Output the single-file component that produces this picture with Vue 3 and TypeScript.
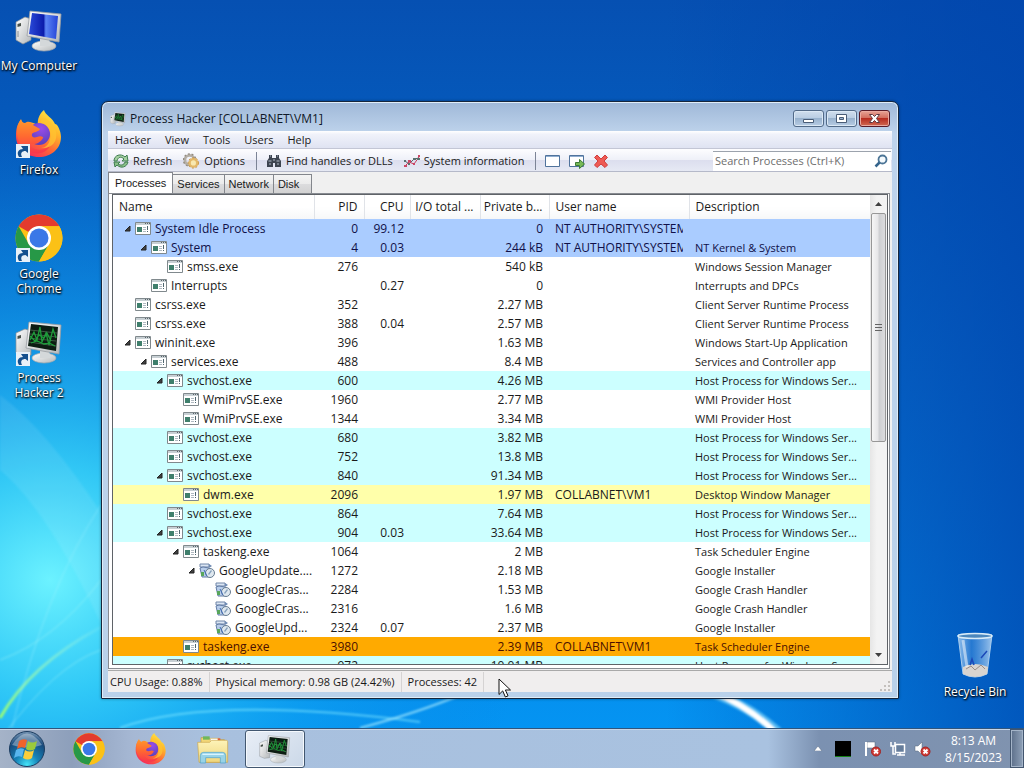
<script setup lang="ts">
import { ref } from 'vue'

interface Proc {
  name: string
  depth: number
  open?: boolean
  kind?: 'google'
  pid: string
  cpu?: string
  bytes: string
  user?: string
  desc?: string
  tone?: 'system' | 'service' | 'elevated' | 'own'
}

const host = 'Host Process for Windows Ser...'
const processes: Proc[] = [
  { name: 'System Idle Process', depth: 0, open: true, pid: '0', cpu: '99.12', bytes: '0', user: 'NT AUTHORITY\\SYSTEM', tone: 'system' },
  { name: 'System', depth: 1, open: true, pid: '4', cpu: '0.03', bytes: '244 kB', user: 'NT AUTHORITY\\SYSTEM', desc: 'NT Kernel & System', tone: 'system' },
  { name: 'smss.exe', depth: 2, pid: '276', bytes: '540 kB', desc: 'Windows Session Manager' },
  { name: 'Interrupts', depth: 1, pid: '', cpu: '0.27', bytes: '0', desc: 'Interrupts and DPCs' },
  { name: 'csrss.exe', depth: 0, pid: '352', bytes: '2.27 MB', desc: 'Client Server Runtime Process' },
  { name: 'csrss.exe', depth: 0, pid: '388', cpu: '0.04', bytes: '2.57 MB', desc: 'Client Server Runtime Process' },
  { name: 'wininit.exe', depth: 0, open: true, pid: '396', bytes: '1.63 MB', desc: 'Windows Start-Up Application' },
  { name: 'services.exe', depth: 1, open: true, pid: '488', bytes: '8.4 MB', desc: 'Services and Controller app' },
  { name: 'svchost.exe', depth: 2, open: true, pid: '600', bytes: '4.26 MB', desc: host, tone: 'service' },
  { name: 'WmiPrvSE.exe', depth: 3, pid: '1960', bytes: '2.77 MB', desc: 'WMI Provider Host' },
  { name: 'WmiPrvSE.exe', depth: 3, pid: '1344', bytes: '3.34 MB', desc: 'WMI Provider Host' },
  { name: 'svchost.exe', depth: 2, pid: '680', bytes: '3.82 MB', desc: host, tone: 'service' },
  { name: 'svchost.exe', depth: 2, pid: '752', bytes: '13.8 MB', desc: host, tone: 'service' },
  { name: 'svchost.exe', depth: 2, open: true, pid: '840', bytes: '91.34 MB', desc: host, tone: 'service' },
  { name: 'dwm.exe', depth: 3, pid: '2096', bytes: '1.97 MB', user: 'COLLABNET\\VM1', desc: 'Desktop Window Manager', tone: 'own' },
  { name: 'svchost.exe', depth: 2, pid: '864', bytes: '7.64 MB', desc: host, tone: 'service' },
  { name: 'svchost.exe', depth: 2, open: true, pid: '904', cpu: '0.03', bytes: '33.64 MB', desc: host, tone: 'service' },
  { name: 'taskeng.exe', depth: 3, open: true, pid: '1064', bytes: '2 MB', desc: 'Task Scheduler Engine' },
  { name: 'GoogleUpdate....', depth: 4, open: true, kind: 'google', pid: '1272', bytes: '2.18 MB', desc: 'Google Installer' },
  { name: 'GoogleCras...', depth: 5, kind: 'google', pid: '2284', bytes: '1.53 MB', desc: 'Google Crash Handler' },
  { name: 'GoogleCras...', depth: 5, kind: 'google', pid: '2316', bytes: '1.6 MB', desc: 'Google Crash Handler' },
  { name: 'GoogleUpd...', depth: 5, kind: 'google', pid: '2324', cpu: '0.07', bytes: '2.37 MB', desc: 'Google Installer' },
  { name: 'taskeng.exe', depth: 3, pid: '3980', bytes: '2.39 MB', user: 'COLLABNET\\VM1', desc: 'Task Scheduler Engine', tone: 'elevated' },
  { name: 'svchost.exe', depth: 2, pid: '972', bytes: '10.01 MB', desc: host, tone: 'service' },
]

const menus = ['Hacker', 'View', 'Tools', 'Users', 'Help']
const tabs = ['Processes', 'Services', 'Network', 'Disk']
const activeTab = ref('Processes')
const query = ref('')

const shortcuts = [
  { label: 'My Computer', icon: 'computer', link: false },
  { label: 'Firefox', icon: 'firefox', link: true },
  { label: 'Google Chrome', icon: 'chrome', link: true },
  { label: 'Process Hacker 2', icon: 'hacker', link: true },
]
const pinned = [
  { label: 'Google Chrome', icon: 'chrome', active: false },
  { label: 'Firefox', icon: 'firefox', active: false },
  { label: 'Windows Explorer', icon: 'explorer', active: false },
  { label: 'Process Hacker', icon: 'hacker', active: true },
]
</script>

<template>
  <div class="desktop">
    <svg class="defs" aria-hidden="true">
      <defs>
        <linearGradient id="screenBlue" x1="0" y1="0" x2="1" y2="0">
          <stop offset="0" stop-color="#2a4ad8" /><stop offset=".5" stop-color="#0c1cac" /><stop offset=".58" stop-color="#5c84f4" /><stop offset="1" stop-color="#2444d8" />
        </linearGradient>
        <linearGradient id="shell" x1="0" y1="0" x2="1" y2="1">
          <stop offset="0" stop-color="#ffffff" /><stop offset="1" stop-color="#b4b8ba" />
        </linearGradient>
        <linearGradient id="fire" x1=".85" y1="0" x2=".25" y2="1">
          <stop offset="0" stop-color="#fff04a" /><stop offset=".35" stop-color="#ffb52a" /><stop offset=".65" stop-color="#ff6a35" /><stop offset="1" stop-color="#f5265d" />
        </linearGradient>
        <linearGradient id="fox" x1="0" y1="0" x2="0" y2="1">
          <stop offset="0" stop-color="#ff9a2c" /><stop offset=".5" stop-color="#ff6a30" /><stop offset="1" stop-color="#f8364c" />
        </linearGradient>
        <radialGradient id="globe" cx=".6" cy=".25" r=".8">
          <stop offset="0" stop-color="#9a4ce8" /><stop offset="1" stop-color="#5340b8" />
        </radialGradient>
        <linearGradient id="folder" x1="0" y1="0" x2="0" y2="1">
          <stop offset="0" stop-color="#fdf3b8" /><stop offset="1" stop-color="#efd67c" />
        </linearGradient>
        <radialGradient id="orb" cx=".5" cy=".95" r=".95">
          <stop offset="0" stop-color="#45e4f8" /><stop offset=".35" stop-color="#1683b8" /><stop offset=".75" stop-color="#174a7c" /><stop offset="1" stop-color="#7d9ab8" />
        </radialGradient>
        <linearGradient id="glass" x1="0" y1="0" x2="1" y2="0">
          <stop offset="0" stop-color="#c4e0f8" stop-opacity=".75" /><stop offset=".4" stop-color="#4a94e0" stop-opacity=".5" /><stop offset="1" stop-color="#cfe6fa" stop-opacity=".75" />
        </linearGradient>
      </defs>
      <symbol id="computer" viewBox="0 0 48 48">
        <path d="M1 16 L10 11 L16 13 V34 L8 38 L1 34Z" fill="url(#shell)" stroke="#8b9095" stroke-width=".7" />
        <path d="M2.500 18 L6 17 V20 L2.500 21Z" fill="#48504a" /><path d="M3 25v6" stroke="#8b9095" />
        <ellipse cx="29" cy="40" rx="12" ry="5" fill="url(#shell)" stroke="#a3a8ac" stroke-width=".7" />
        <path d="M25 30 h9 l1 10 h-10z" fill="#d4d8da" />
        <path d="M15 5 L46 8 L44 36 L12 30Z" fill="url(#shell)" stroke="#999da2" stroke-width=".8" />
        <path d="M17 7 L43 10 L41 33 L14 28Z" fill="url(#screenBlue)" />
      </symbol>
      <symbol id="hacker" viewBox="0 0 48 48">
        <path d="M1 15 L10 11 L16 13 V37 L8 38 L1 35Z" fill="url(#shell)" stroke="#8b9095" stroke-width=".7" />
        <path d="M2.500 18 L6 17 V20 L2.500 21Z" fill="#48504a" />
        <ellipse cx="29" cy="40" rx="12" ry="5" fill="url(#shell)" stroke="#a3a8ac" stroke-width=".7" />
        <path d="M25 30 h9 l1 10 h-10z" fill="#d4d8da" />
        <path d="M14 4 L46 7 L44 36 L11 30Z" fill="url(#shell)" stroke="#999da2" stroke-width=".8" />
        <path d="M16 6 L43 9 L41 33 L13 28Z" fill="#0c1c12" />
        <path d="M15 12l27 3M15 16l27 3M14 20l27 3M14 24l27 4" stroke="#4d6351" stroke-width=".8" />
        <path d="M15 22l4-8 3 8 3-13 2 15 4-9 3 12 4-16 3 9M16 25l6-2 7 3 5-1 6 3M15 18l5 5 4-6 5 3 3-5 4 8" fill="none" stroke="#1e9c3a" stroke-width="1.300" />
      </symbol>
      <symbol id="chrome" viewBox="0 0 48 48">
        <circle cx="24" cy="24" r="23.500" fill="#fbc116" />
        <path d="M24 24 L3.650 12.250 A23.500 23.500 0 0 1 44.350 12.250 H24Z" fill="#e33b2e" />
        <path d="M3.650 12.250 A23.500 23.500 0 0 0 24 47.500 L34.200 29.900 L24 24 L13.800 29.900Z" fill="#279847" />
        <path d="M24 12.250 H44.350 A23.500 23.500 0 0 1 24 47.500 L34.200 29.900Z" fill="#fbc116" />
        <circle cx="24" cy="24" r="12" fill="#fff" /><circle cx="24" cy="24" r="9.500" fill="#3b78e7" />
      </symbol>
      <symbol id="firefox" viewBox="0 0 48 48">
        <path d="M29 0 C30 5 38 8 40 14 C43 14 46 22 46 27 C46 39 36 47 24 47 C11 47 1 38 1 26 C1 19 2 14 6 10 C7 12 8 14 10 14 C14 10 20 14 23 15 C22 9 25 3 29 0Z" fill="url(#fire)" />
        <circle cx="24" cy="24" r="11" fill="url(#globe)" />
        <path d="M2 22 C2 17 3 13 6 9 C7 12 8 13 10 13 C14 10 17 13 18 15 L25 19 C24 22 18 22 17 24 C16 27 19 28 22 27 C26 25 29 27 28 28 C25 34 17 36 12 32 C17 42 31 42 36 33 C34 43 22 46 13 41 C6 38 2 30 2 22Z" fill="url(#fox)" />
        <path d="M26 13 C33 14 37 21 35 29 C34 35 30 38 26 38 C37 39 43 31 41 22 C39 15 35 12 30 8 C27 9 25 10 26 13Z" fill="#ffc431" opacity=".75" />
      </symbol>
      <symbol id="explorer" viewBox="0 0 48 48">
        <path d="M6 7 h12 l2 3 h21 v34 H6z" fill="#f2d777" stroke="#bd9a45" />
        <path d="M9 5h10v5H9z" fill="#70b85a" /><path d="M20 8h13v5H20z" fill="#fff" stroke="#d9b65a" /><path d="M31 8h4v5h-4z" fill="#e0583a" />
        <path d="M1 14 h18 l3-3 h22 q2 0 2 2 v31 H3z" fill="url(#folder)" stroke="#cba64c" />
        <path d="M5 45 V34 q0-5 5-5 h28 q5 0 5 5 v11 h-8 v-8 H13 v8z" fill="#8ed2f2" fill-opacity=".9" stroke="#4ca0cc" />
        <path d="M8 32h32" stroke="#d8f4ff" stroke-width="2" />
      </symbol>
      <symbol id="exe" viewBox="0 0 16 14">
        <path d="M.5 .5h15v12H.5z" fill="#fff" stroke="#80898d" />
        <path d="M1 1h14v2H1z" fill="#c8d0d4" /><path d="M10 1h1v1h-1zM12 1h1v1h-1zM14 1h1v1h-1z" fill="#59646a" />
        <path d="M2 5h5v5H2z" fill="#3f7f6c" /><path d="M8 5h3v1H8zM8 7h3v1H8zM8 9h3v1H8z" fill="#b1bac2" /><path d="M12.500 4v4M12.500 9v1" stroke="#4f666f" />
      </symbol>
      <symbol id="google" viewBox="0 0 16 16">
        <path d="M1 1h9v3H1z" fill="#dbe6f4" stroke="#7186a8" /><path d="M1 5l3-1 6 1v9H3z" fill="#b8cdea" stroke="#627ca6" />
        <path d="M10 1l3 2-3 2" fill="#6e8ab3" /><path d="M2 9h3v4H2z" fill="#58a65b" />
        <circle cx="11" cy="10" r="4.500" fill="#dfe8ef" stroke="#667b90" /><path d="M9 11l3-4 1 1-3 4z" fill="#86a1bc" />
        <path d="M5 7l3 6" stroke="#406ab8" />
      </symbol>
    </svg>

    <svg class="wallpaper" viewBox="0 0 1024 768" preserveAspectRatio="none" aria-hidden="true">
      <defs>
        <linearGradient id="sky" x1="0" y1="0" x2="0" y2="1">
          <stop offset="0" stop-color="#0650b2" /><stop offset=".14" stop-color="#0558ba" /><stop offset=".5" stop-color="#0872d2" /><stop offset="1" stop-color="#0498f6" />
        </linearGradient>
        <radialGradient id="glow" gradientUnits="userSpaceOnUse" cx="0" cy="0" r="1" gradientTransform="translate(50 580) scale(480 450)">
          <stop offset="0" stop-color="#6cf2ff" /><stop offset=".25" stop-color="#36d0f8" stop-opacity=".9" /><stop offset=".6" stop-color="#12a4f0" stop-opacity=".5" /><stop offset="1" stop-color="#0a80e0" stop-opacity="0" />
        </radialGradient>
        <linearGradient id="dusk" x1="0" y1="0" x2="1" y2="0">
          <stop offset=".65" stop-color="#0040a8" stop-opacity="0" /><stop offset="1" stop-color="#0044ac" stop-opacity=".75" />
        </linearGradient>
        <linearGradient id="blade" x1="0" y1="1" x2="1" y2="0">
          <stop offset="0" stop-color="#9cff70" /><stop offset="1" stop-color="#bffff0" stop-opacity=".1" />
        </linearGradient>
        <filter id="soft"><feGaussianBlur stdDeviation="1" /></filter>
      </defs>
      <path d="M0 0H1024V768H0z" fill="url(#sky)" />
      <path d="M0 0H1024V768H0z" fill="url(#glow)" />
      <path d="M0 0H1024V768H0z" fill="url(#dusk)" />
      <path d="M0 395 Q60 440 130 560 V690 Q60 520 0 470z" fill="#fff" opacity=".08" filter="url(#soft)" />
      <g fill="none" filter="url(#soft)">
        <path d="M0 718 Q30 665 101 627" stroke="url(#blade)" stroke-width="3" />
        <path d="M12 728 Q45 590 101 505" stroke="#b0f4ff" stroke-opacity=".4" />
        <path d="M0 660 Q55 640 101 580M0 740 Q55 665 101 650" stroke="#c0fff5" stroke-opacity=".4" />
        <path d="M120 728 Q210 695 420 722" stroke="#80e8ff" stroke-opacity=".6" stroke-width="2" />
        <path d="M360 728 Q420 712 460 695" stroke="#b0f0ff" stroke-opacity=".7" stroke-width="2" />
        <path d="M704 690 Q744 702 778 732" stroke="#9be8ff" stroke-width="10" stroke-opacity=".55" />
        <path d="M708 690 Q746 704 775 732" stroke="#fff" stroke-width="6" />
      </g>
    </svg>

    <nav class="shortcuts" aria-label="Desktop">
      <button v-for="s in shortcuts" :key="s.label" class="shortcut" :class="{ linked: s.link }" type="button">
        <span class="art">
          <svg width="48" height="48"><use :href="'#' + s.icon" /></svg>
          <svg v-if="s.link" class="link-mark" width="14" height="14" viewBox="0 0 14 14"><path d="M0 0h14v14H0z" fill="#e8f0f8" /><path d="M3 13 C0 8 3 5 7 5 L5 2 H12 V9 L9.500 7 C6 7 4 9 6 13Z" fill="#15508e" /></svg>
        </span>
        <span class="caption">{{ s.label }}</span>
      </button>
    </nav>

    <button class="shortcut bin" type="button">
      <svg width="48" height="48" viewBox="0 0 48 48">
        <path d="M7 3 L41 3 L36 42 Q24 48 12 42Z" fill="url(#glass)" stroke="#a9cdee" />
        <path d="M12 35 Q24 29 37 35 L36 42 Q24 48 12 42Z" fill="#d8d4d0" />
        <path d="M15 37l5-3 4 4 6-5 4 4" stroke="#9a8d88" fill="none" /><path d="M19 33l2-6 2 6M30 26l6-7" stroke="#1c48b8" fill="none" stroke-width="1.500" />
        <ellipse cx="24" cy="4" rx="17" ry="2.500" fill="#4b87bd" stroke="#d9ecf8" stroke-width="1.500" />
        <path d="M12 8l4 27" stroke="#fff" stroke-opacity=".5" stroke-width="3" />
      </svg>
      <span class="caption">Recycle Bin</span>
    </button>

    <main class="window">
      <header class="titlebar">
        <svg width="16" height="16"><use href="#hacker" /></svg>
        <h1>Process Hacker [COLLABNET\VM1]</h1>
        <div class="controls">
          <button type="button" aria-label="Minimize"><svg width="13" height="10" viewBox="0 0 13 10"><path d="M1.500 5.500h10v3h-10z" fill="#fff" stroke="#495c77" /></svg></button>
          <button type="button" aria-label="Maximize"><svg width="13" height="10" viewBox="0 0 13 10"><path d="M1.500 .5h10v8h-10zM4.500 3.500v2h4v-2z" fill="#fff" fill-rule="evenodd" stroke="#495c77" /></svg></button>
          <button type="button" class="close" aria-label="Close"><svg width="13" height="10" viewBox="0 0 13 10"><path d="M1.500 .5h3l2 2 2-2h3L8.500 4.500l3 4h-3l-2-2-2 2h-3l3-4z" fill="#fff" stroke="#5c3a42" /></svg></button>
        </div>
      </header>

      <div class="client">
        <nav class="menubar" aria-label="Menu"><button v-for="m in menus" :key="m" type="button">{{ m }}</button></nav>

        <div class="toolbar">
          <button type="button">
            <svg width="16" height="16" viewBox="0 0 16 16"><path d="M1 8 C1 2 8 0 12 4 L14 2 L15 8 H9 L11 6 C8 3 5 4 4 8Z" fill="#a4cfa0" stroke="#3f7d50" /><path d="M15 9 C14 14 8 16 4 12 L2 14 L1 9 H7 L5 11 C8 13 11 12 12 9Z" fill="#8abf88" stroke="#3f7d50" /></svg>Refresh
          </button>
          <button type="button">
            <svg width="17" height="16" viewBox="0 0 18 16"><circle cx="7" cy="7" r="5" fill="none" stroke="#b5afa6" stroke-width="3" /><circle cx="7" cy="7" r="6.500" fill="none" stroke="#928b80" stroke-width="1.500" stroke-dasharray="2 2" /><circle cx="11" cy="10" r="4" fill="#f8e8b0" stroke="#e4b868" stroke-width="2.500" /><circle cx="11" cy="10" r="5.500" fill="none" stroke="#c58d32" stroke-width="1" stroke-dasharray="2 2" /></svg>Options
          </button>
          <i class="rule"></i>
          <button type="button">
            <svg width="16" height="16" viewBox="0 0 16 16"><path d="M3 2h3v3h4V2h3v3l2 3v6H9v-4H7v4H1V8l2-3z" fill="#3d4450" /><path d="M2.500 8h3M10.500 8h3M3 11h2M11 11h2M7 7h2M4 3h1M11 3h1" stroke="#b2bbc8" /></svg>Find handles or DLLs
          </button>
          <button type="button">
            <svg width="16" height="16" viewBox="0 0 16 16"><path d="M1 8l4 3 5-5 5-1" fill="none" stroke="#56646c" /><path d="M1 13l4-4 5 2 5-7" fill="none" stroke="#c83c5c" /><path d="M0 7h2v2H0zM4 10h2v2H4zM9 5h3v2H9zM13 5h3v2h-3z" fill="#58716e" /><path d="M0 12h3v2H0zM4 7h3v2H4zM9 10h2v2H9zM14 2h2v2h-2z" fill="#cb4665" /></svg>System information
          </button>
          <i class="rule"></i>
          <button type="button" class="glyph" aria-label="Find window"><svg width="16" height="16" viewBox="0 0 16 16"><path d="M.5 2.500h14v11H.5z" fill="#fff" stroke="#50739c" /><path d="M1 3h13v1H1z" fill="#8fadd0" /></svg></button>
          <button type="button" class="glyph" aria-label="Find window and thread"><svg width="16" height="16" viewBox="0 0 16 16"><path d="M.5 2.500h14v11H.5z" fill="#fff" stroke="#50739c" /><path d="M1 3h13v1H1z" fill="#8fadd0" /><path d="M6.500 9.500h4v-3l5 4.500-5 4.500v-3h-4z" fill="#76b956" stroke="#3d7b35" /></svg></button>
          <button type="button" class="glyph" aria-label="Find window and kill"><svg width="16" height="16" viewBox="0 0 16 16"><path d="M4 2l4 4 4-4 2.500 2.500L11 8l3.500 4L12 14.500 8 11l-4 3.500L1.500 12 5 8 1.500 4.500z" fill="#ee5a54" stroke="#d03c3c" /></svg></button>
          <label class="search">
            <input v-model="query" type="text" placeholder="Search Processes (Ctrl+K)" aria-label="Search Processes" />
            <svg width="14" height="14" viewBox="0 0 14 14"><circle cx="8.500" cy="5.500" r="4" fill="#f5fafd" stroke="#4c7596" stroke-width="1.800" /><path d="M5.500 8.500L1.500 12.500" stroke="#34648c" stroke-width="2.500" /></svg>
          </label>
        </div>

        <div class="tabs" role="tablist">
          <button v-for="t in tabs" :key="t" type="button" role="tab" :aria-selected="t === activeTab" :class="{ active: t === activeTab }" @click="activeTab = t">{{ t }}</button>
        </div>

        <section class="panel">
          <div class="list">
            <div class="rows">
              <table>
                <colgroup><col class="c-name" /><col class="c-pid" /><col class="c-cpu" /><col class="c-io" /><col class="c-bytes" /><col class="c-user" /><col /></colgroup>
                <thead>
                  <tr><th>Name</th><th class="num">PID</th><th class="num">CPU</th><th class="num">I/O total ...</th><th class="num">Private b...</th><th>User name</th><th>Description</th></tr>
                </thead>
                <tbody>
                  <tr v-for="(p, i) in processes" :key="i" :class="p.tone">
                    <td class="name">
                      <div class="node" :style="{ paddingLeft: p.depth * 16 + 'px' }">
                        <svg width="7" height="7" viewBox="0 0 7 7"><path v-if="p.open" d="M6 1v5H1z" fill="#404040" stroke="#222" /></svg>
                        <svg v-if="p.kind === 'google'" width="16" height="16"><use href="#google" /></svg>
                        <svg v-else width="16" height="14"><use href="#exe" /></svg>
                        <span>{{ p.name }}</span>
                      </div>
                    </td>
                    <td class="num">{{ p.pid }}</td>
                    <td class="num">{{ p.cpu }}</td>
                    <td></td>
                    <td class="num">{{ p.bytes }}</td>
                    <td><div class="clip">{{ p.user }}</div></td>
                    <td class="desc">{{ p.desc }}</td>
                  </tr>
                </tbody>
              </table>
            </div>
            <div class="scrollbar">
              <button type="button" aria-label="Scroll up"><svg width="7" height="4" viewBox="0 0 7 4"><path d="M0 4L3.500 0 7 4z" fill="#404040" /></svg></button>
              <div class="track"><div class="thumb"><i></i><i></i><i></i></div></div>
              <button type="button" aria-label="Scroll down"><svg width="7" height="4" viewBox="0 0 7 4"><path d="M0 0h7L3.500 4z" fill="#404040" /></svg></button>
            </div>
          </div>
        </section>

        <footer class="status">
          <span>CPU Usage: 0.88%</span><span>Physical memory: 0.98 GB (24.42%)</span><span>Processes: 42</span>
          <svg class="grip" width="11" height="11" viewBox="0 0 11 11"><path d="M8 0h2v2H8zM8 4h2v2H8zM8 8h2v2H8zM4 4h2v2H4zM4 8h2v2H4zM0 8h2v2H0z" fill="#c4c0bd" /></svg>
        </footer>
      </div>
    </main>

    <footer class="taskbar">
      <button class="start" type="button" aria-label="Start">
        <svg width="38" height="38" viewBox="0 0 38 38">
          <circle cx="19" cy="19" r="17.500" fill="url(#orb)" stroke="#1b3c60" />
          <path d="M4 15 Q19 -8 34 15 Q19 20 4 15Z" fill="#fff" opacity=".35" />
          <path d="M11 11q4-3 8-1l-2 8q-4-2-8 1z" fill="#f0622b" /><path d="M20 11q4 3 9 0l-2 8q-5 3-9 0z" fill="#9bca3c" />
          <path d="M8 20q4-3 8-1l-2 8q-4-2-8 1z" fill="#58b5ee" /><path d="M17 20q5 3 9 0l-2 8q-4 3-9 0z" fill="#fbce3a" />
        </svg>
      </button>
      <button v-for="p in pinned" :key="p.label" type="button" class="pin" :class="{ active: p.active }" :aria-label="p.label">
        <svg width="32" height="32"><use :href="'#' + p.icon" /></svg>
      </button>
      <div class="tray">
        <svg class="spaced" width="8" height="5" viewBox="0 0 8 5"><path d="M0 5L4 0l4 5z" fill="#fff" stroke="#516580" stroke-width=".5" /></svg>
        <svg class="spaced" width="16" height="16" viewBox="0 0 16 16"><path d="M0 0h16v16H0z" /><path d="M0 15h16v1H0z" fill="#168016" /></svg>
        <svg width="18" height="16" viewBox="0 0 18 16"><path d="M3 1h8v6H3z" fill="#fff" stroke="#56657a" stroke-width=".5" /><path d="M2 1v14" stroke="#fff" stroke-width="2" /><circle cx="12" cy="10.500" r="4.500" fill="#d03a34" stroke="#a02424" /><path d="M10 8.500l4 4M14 8.500l-4 4" stroke="#fff" stroke-width="1.800" /></svg>
        <svg width="16" height="16" viewBox="0 0 16 16"><path d="M5.500 3.500h9v8h-9z" fill="#667d9b" stroke="#fff" stroke-width="1.500" /><path d="M7 14h8M10 12v2M1 1v4h4V1M3 5v8h3" fill="none" stroke="#fff" stroke-width="1.500" /></svg>
        <svg width="17" height="16" viewBox="0 0 17 16"><path d="M1 5h3l4-4v13l-4-4H1z" fill="#fff" stroke="#56657a" stroke-width=".5" /><circle cx="11.500" cy="10.500" r="4.500" fill="#d03a34" stroke="#a02424" /><path d="M9.500 8.500l4 4M13.500 8.500l-4 4" stroke="#fff" stroke-width="1.800" /></svg>
      </div>
      <div class="clock"><time>8:13 AM</time><time>8/15/2023</time></div>
      <button class="peek" type="button" aria-label="Show desktop"></button>
    </footer>

    <svg class="cursor" width="14" height="21" viewBox="0 0 14 21" aria-hidden="true"><path d="M1 1v15.500l3.700-3.600L7.400 19l2.600-1.200-2.600-5.800h5.100z" fill="#fff" stroke="#111" /></svg>
  </div>
</template>

<style>
html, body { margin: 0; height: 100%; }
</style>

<style scoped>
.desktop { position: relative; display: flex; flex-direction: column; height: 100vh; min-height: 480px; overflow: hidden; font: 12px/16px "Open Sans", "Noto Sans", sans-serif; color: #1a1a1a; }
.desktop *, .desktop *::before { box-sizing: border-box; }
svg { display: block; flex: none; }
button { margin: 0; padding: 0; border: 0; background: none; font: inherit; color: inherit; }
.defs { position: absolute; width: 0; height: 0; }
.wallpaper { position: absolute; inset: 0; width: 100%; height: 100%; }

.shortcuts { position: absolute; top: 6px; left: 0; display: flex; flex-direction: column; width: 78px; }
.shortcut { display: flex; flex-direction: column; align-items: center; gap: 4px; min-height: 104px; color: #fff; line-height: 15px; text-shadow: 0 1px 2px #000, 1px 1px 2px #000; }
.art { position: relative; }
.link-mark { position: absolute; left: 1px; bottom: 0; }
.caption { text-align: center; white-space: nowrap; }
.linked .caption { max-width: 56px; white-space: normal; }
.bin { position: absolute; right: 10px; bottom: 32px; width: 78px; }

.window { position: absolute; inset: 101px 125px 69px 101px; display: flex; flex-direction: column; padding: 0 6px 6px; border: 1px solid #16263c; border-radius: 7px 7px 1px 1px; background: linear-gradient(#9fb8d8, #bfd4ec 32px, #b9d1ea); box-shadow: inset 0 0 0 1px #e0edf8, 0 0 3px rgba(0, 0, 0, .4); }
.titlebar { display: flex; align-items: center; height: 29px; padding: 4px 2px 0 2px; }
.titlebar h1 { flex: 1; margin: 0 0 0 4px; font-size: 12px; font-weight: 400; color: #101828; }
.controls { display: flex; gap: 2px; }
.controls button { display: grid; place-items: center; width: 31px; height: 17px; border: 1px solid #526a88; border-radius: 3px; background: linear-gradient(#d0deed, #b9cde3 48%, #98b2ce 50%, #b7cce4); box-shadow: inset 0 0 0 1px #dbe8f5; }
.controls .close { border-color: #591b28; background: linear-gradient(#e7a396, #d26b5c 48%, #b72c20 50%, #d06a52); box-shadow: inset 0 0 0 1px #eaaaa0; }

.client { flex: 1; display: flex; flex-direction: column; min-height: 0; background: #f0f0f0; }
.menubar { display: flex; height: 18px; font-size: 11px; background: linear-gradient(#fff, #f0f2fa 20%, #dfe3f2); border-bottom: 1px solid #c3c6d5; }
.menubar button { padding: 0 7px; line-height: 18px; }
.toolbar { display: flex; align-items: center; height: 23px; padding: 1px 1px 0 5px; font-size: 11px; background: linear-gradient(#fdfdff, #eef0f8 50%, #dcdeee 51%, #e6e9f4); border-bottom: 1px solid #b5b9c9; }
.toolbar button { display: flex; align-items: center; gap: 4px; margin-right: 11px; white-space: nowrap; }
.toolbar .glyph { margin-right: 8px; }
.rule { width: 1px; height: 18px; margin-right: 9px; background: #7c8496; }
.search { display: flex; align-items: center; width: 178px; height: 20px; margin-left: auto; padding: 0 3px 0 2px; background: #fff; border-top: 1px solid #9ca3ad; }
.search input { flex: 1; min-width: 0; padding: 0; border: 0; outline: 0; font: inherit; background: none; }
.search input::placeholder { color: #6d6d6d; opacity: 1; }

.tabs { display: flex; align-items: flex-end; height: 21px; padding-left: 1px; font-family: "Liberation Sans", sans-serif; font-size: 11px; }
.tabs button { height: 19px; padding: 0 4px; border: 1px solid #83868c; border-bottom: 0; margin-left: -1px; background: linear-gradient(#f4f4f4, #ebebeb 50%, #dcdcde 51%, #d2d2d2); }
.tabs .active { height: 21px; padding: 0 6px; background: #fff; }
.tabs button:last-child { padding-right: 12px; }

.panel { flex: 1; display: flex; min-height: 0; margin-right: 2px; padding: 0 1px 3px 3px; border: 1px solid #878b91; background: #fff; }
.list { flex: 1; display: flex; min-width: 0; border: 1px solid #5f6368; }
.rows { flex: 1; min-width: 0; overflow: hidden; }
table { width: 100%; table-layout: fixed; border-collapse: collapse; }
.c-name { width: 201px; } .c-pid { width: 50px; } .c-cpu { width: 46px; } .c-io { width: 70px; } .c-bytes { width: 69px; } .c-user { width: 140px; }
th, td { height: 19px; padding: 0 6px; line-height: 18px; text-align: left; font-weight: 400; white-space: nowrap; overflow: hidden; }
th { height: 24px; border-right: 1px solid #e0e3e8; background: linear-gradient(#fff 50%, #f6f7f8); }
th:last-child { border-right: 0; }
.num { text-align: right; padding-left: 0; }
.name { padding: 0 0 0 11px; }
.desc { padding-right: 0; font-size: 11px; }
.node { display: flex; align-items: center; gap: 4px; }
.clip { overflow: hidden; }
.system { background: #aaccff; color: #101048; }
.service { background: #ccffff; }
.own { background: #ffffaa; }
.elevated { background: #ffaa00; color: #4a1000; }

.scrollbar { display: flex; flex-direction: column; width: 17px; background: linear-gradient(90deg, #e6e6e6, #f3f3f3 40%); }
.scrollbar button { display: grid; place-items: center; height: 18px; }
.track { flex: 1; }
.thumb { display: flex; flex-direction: column; align-items: center; justify-content: center; gap: 2px; height: 53%; margin: 0 1px; border: 1px solid #979797; border-radius: 2px; background: linear-gradient(90deg, #f6f6f6, #e6e6e8 45%, #cecfd2 55%, #dcdcde); }
.thumb i { width: 7px; height: 1px; background: #646464; }

.status { display: flex; align-items: center; height: 22px; margin-top: 1px; padding: 0 1px 0 2px; border-top: 1px solid #a9a9a9; background: #f0eeee; font-size: 11px; white-space: nowrap; }
.status span { padding-right: 6px; margin-right: 6px; border-right: 1px solid #d5d3d3; line-height: 20px; }
.grip { margin-left: auto; align-self: flex-end; }

.taskbar { position: relative; display: flex; align-items: center; height: 40px; margin-top: auto; padding-left: 8px; border-top: 1px solid #31557c; background: linear-gradient(90deg, #a5b3c8, #8d9fbb 7%, #a6b8d4 13%, #a8c0de 20%, #a9c2e0 75%, #7b91b1 80%, #8093af); box-shadow: inset 0 1px #c7d6e8; color: #fff; }
.start { width: 38px; margin-right: 13px; }
.pin { display: grid; place-items: center; width: 60px; height: 38px; margin-right: 2px; }
.pin.active { border: 1px solid #425770; border-radius: 3px; background: linear-gradient(135deg, #e8eef6, #cbd8e8); box-shadow: inset 0 0 0 1px #f5f9fd; }
.tray { display: flex; align-items: center; gap: 8px; margin: 0 6px 0 auto; }
.tray .spaced { margin-right: 5px; }
.clock { display: flex; flex-direction: column; align-items: center; width: 73px; line-height: 17px; }
.peek { width: 14px; height: 39px; border: 1px solid #43566f; background: linear-gradient(90deg, #5c6f8a, #8fa1b8); box-shadow: inset 0 0 0 1px #a4b4c8; }
.cursor { position: absolute; left: 498px; top: 678px; }
</style>
